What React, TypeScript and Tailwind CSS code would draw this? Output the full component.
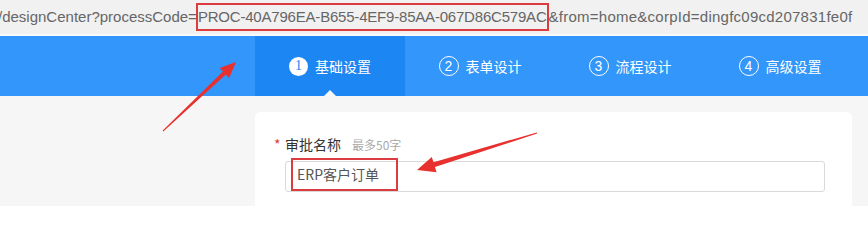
import React from "react";

const steps = [
  { n: "1", label: "基础设置", active: true },
  { n: "2", label: "表单设计", active: false },
  { n: "3", label: "流程设计", active: false },
  { n: "4", label: "高级设置", active: false },
];

export default function App() {
  return (
    <div className="relative w-[868px] h-[206px] overflow-hidden bg-[#f6f6f6] font-['Noto_Sans_CJK_SC',sans-serif]">
      {/* URL bar */}
      <div className="h-[34px] bg-[#f1f1f1] flex items-center whitespace-nowrap text-[15px] text-[#666] font-['Liberation_Sans','Noto_Sans_CJK_SC',sans-serif] -ml-[2px]">
        <span>/designCenter?processCode=</span>
        <span className="inline-flex items-center h-[28px] border-2 border-[#dc3b40] -ml-[1px] tracking-[-0.2px]">PROC-40A796EA-B655-4EF9-85AA-067D86C579AC</span>
        <span className="tracking-[0.25px]">&amp;from=home&amp;corpId=dingfc09cd207831fe0f</span>
      </div>
      <div className="h-[2px] bg-[#fafafa]" />
      {/* Nav */}
      <div className="h-[60px] bg-[#3296fa] flex">
        <div className="w-[255px]" />
        {steps.map((s) => (
          <div
            key={s.n}
            className={`relative w-[150px] flex items-center justify-center gap-[7px] text-[14px] text-white ${s.active ? "bg-[#1c87f2]" : ""}`}
          >
            {s.active ? (
              <span className="w-[19px] h-[19px] rounded-full bg-white text-[#1c87f2] flex items-center justify-center text-[14px] leading-none font-['Liberation_Serif',serif]">
                {s.n}
              </span>
            ) : (
              <span className="w-[20px] h-[20px] rounded-full border border-white text-white flex items-center justify-center text-[14px] leading-none font-['Liberation_Sans',sans-serif]">
                {s.n}
              </span>
            )}
            <span>{s.label}</span>
            {s.active && (
              <span className="absolute bottom-0 left-1/2 -translate-x-1/2 w-0 h-0 border-l-[6px] border-r-[6px] border-b-[6px] border-l-transparent border-r-transparent border-b-[#f6f6f6]" />
            )}
          </div>
        ))}
      </div>
      {/* Content */}
      <div className="pl-[255px] pt-[16px]">
        <div className="w-[597px] h-[140px] bg-white rounded-[6px] pl-[19px] pt-[22px]">
          <div className="flex items-baseline h-[20px]">
            <span className="text-[#e03c3c] text-[14px] w-[11px]">*</span>
            <span className="text-[14px] text-[#333]">审批名称</span>
            <span className="ml-[11px] text-[12px] text-[#aaa]">最多50字</span>
          </div>
          <div className="ml-[11px] mt-[7px] w-[540px] h-[31px] border border-[#d9d9d9] rounded-[3px] flex items-start pl-[5px]">
            <span className="-mt-[4px] h-[33px] flex items-center border-2 border-[#dc3b40] pl-[4px] pr-[17px] text-[14px] text-[#555]">
              ERP客户订单
            </span>
          </div>
        </div>
      </div>
      {/* Annotation arrows */}
      <svg className="absolute left-0 top-0 pointer-events-none" width="868" height="206" viewBox="0 0 868 206">
        <polygon
          fill="#e8302e"
          points="163.3,131.4 225.8,74.5 229.2,78.1 236,62 219.6,67.9 223.0,71.5 162.7,130.6"
        />
        <polygon
          fill="#e8302e"
          points="536.8,132.4 433.5,162.3 431.8,157.1 417,170 436.6,172.3 434.9,167.1 537.2,133.6"
        />
      </svg>
    </div>
  );
}
